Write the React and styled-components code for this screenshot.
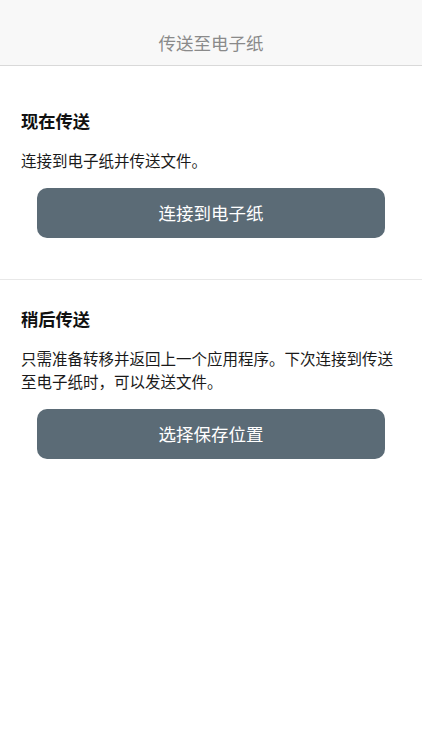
import React from "react";
import styled, { createGlobalStyle } from "styled-components";

const Global = createGlobalStyle`
  html, body { margin: 0; padding: 0; background: #ffffff; }
  body { font-family: "Noto Sans CJK SC", "Noto Sans", sans-serif; -webkit-font-smoothing: antialiased; }
  * { box-sizing: border-box; }
`;

const Page = styled.div`
  width: 422px;
  min-height: 750px;
  background: #ffffff;
  display: flex;
  flex-direction: column;
`;

const Header = styled.header`
  height: 66px;
  background: #f8f8f8;
  border-bottom: 1px solid #d9d9d9;
  display: flex;
  align-items: flex-end;
  justify-content: center;
  padding-bottom: 10px;
`;

const Title = styled.h1`
  margin: 0;
  font-size: 17.5px;
  font-weight: 400;
  line-height: 24px;
  color: #8a8a8a;
`;

const Section = styled.section`
  display: flex;
  flex-direction: column;
  padding: ${(p) => p.$top}px 21px 41px;
  border-bottom: ${(p) => (p.$divider ? "1px solid #e8e8e8" : "none")};
`;

const Heading = styled.h2`
  margin: 0;
  font-size: 17.3px;
  font-weight: 700;
  line-height: 24px;
  color: #111111;
`;

const Text = styled.p`
  margin: 16px 0 0;
  font-size: 15.5px;
  line-height: 23px;
  color: #1a1a1a;
`;

const Button = styled.button`
  margin: 15.5px 16px 0;
  height: 50px;
  border: none;
  border-radius: 10px;
  background: #5b6b76;
  color: #ffffff;
  font-family: inherit;
  font-size: 17.5px;
  font-weight: 400;
  display: flex;
  align-items: center;
  justify-content: center;
  cursor: pointer;
`;

export default function App() {
  return (
    <Page>
      <Global />
      <Header>
        <Title>传送至电子纸</Title>
      </Header>
      <Section $top={43} $divider>
        <Heading>现在传送</Heading>
        <Text>连接到电子纸并传送文件。</Text>
        <Button>连接到电子纸</Button>
      </Section>
      <Section $top={27.5}>
        <Heading>稍后传送</Heading>
        <Text>只需准备转移并返回上一个应用程序。下次连接到传送至电子纸时，可以发送文件。</Text>
        <Button>选择保存位置</Button>
      </Section>
    </Page>
  );
}
